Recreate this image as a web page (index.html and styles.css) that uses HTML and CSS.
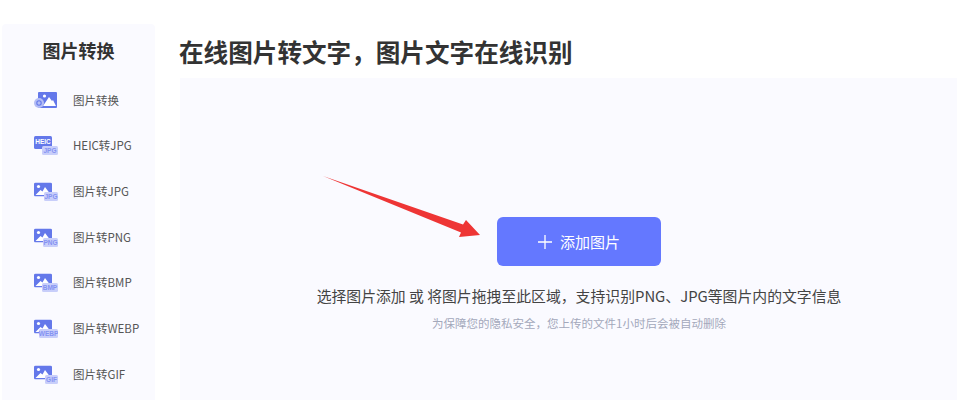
FILE: index.html
```html
<!DOCTYPE html>
<html lang="zh-CN">

<head>
    <meta charset="UTF-8">
    <title>在线图片转文字</title>
    <link rel="stylesheet" href="styles.css">
</head>

<body>
    <svg width="0" height="0" class="defs">
        <symbol id="pic" viewBox="0 0 18 14">
            <rect width="18" height="14" rx="1.5" fill="#6478ea"/>
            <circle cx="4.5" cy="4" r="1.6" fill="#fff"/>
            <path d="M1.5 12.5 L6.5 7.5 L8.5 9 L11 4.5 L17 12.5 Z" fill="#fff"/>
        </symbol>
    </svg>

    <aside class="sidebar">
        <h2>图片转换</h2>
        <ul class="menu">
            <li>
                <svg class="ico" viewBox="0 0 24 20">
                    <rect x="4" y="2" width="19" height="16" rx="1" fill="#6478ea"/>
                    <path d="M9 16 L15 7 L18 11 L19 10 L22 16 Z" fill="#fff"/>
                    <circle cx="10.5" cy="6" r="1.6" fill="#fff"/>
                    <circle cx="5" cy="13" r="5" fill="#b4bdf5"/>
                    <circle cx="5" cy="13" r="2.2" fill="none" stroke="#6478ea" stroke-width="1.1"/>
                </svg>
                <span>图片转换</span>
            </li>
            <li>
                <svg class="ico" viewBox="0 0 24 20">
                    <rect x="0" y="1" width="18" height="13" rx="1.5" fill="#6478ea"/>
                    <text x="9" y="8.5" class="t-heic">HEIC</text>
                    <rect x="8" y="11" width="16" height="9" rx="1.5" fill="#c8cefa"/>
                    <text x="16" y="18" class="t-sub">JPG</text>
                </svg>
                <span>HEIC转JPG</span>
            </li>
            <li>
                <svg class="ico" viewBox="0 0 24 20">
                    <use href="#pic" y="1.5" width="18" height="14"/>
                    <rect x="10" y="11" width="14" height="9" rx="1.5" fill="#c8cefa"/>
                    <text x="17" y="18" class="t-sub">JPG</text>
                </svg>
                <span>图片转JPG</span>
            </li>
            <li>
                <svg class="ico" viewBox="0 0 24 20">
                    <use href="#pic" y="1.5" width="18" height="14"/>
                    <rect x="9" y="11" width="15" height="9" rx="1.5" fill="#c8cefa"/>
                    <text x="16.5" y="18" class="t-sub">PNG</text>
                </svg>
                <span>图片转PNG</span>
            </li>
            <li>
                <svg class="ico" viewBox="0 0 24 20">
                    <use href="#pic" y="1.5" width="18" height="14"/>
                    <rect x="8" y="11" width="16" height="9" rx="1.5" fill="#c8cefa"/>
                    <text x="16" y="18" class="t-sub">BMP</text>
                </svg>
                <span>图片转BMP</span>
            </li>
            <li>
                <svg class="ico" viewBox="0 0 24 20">
                    <use href="#pic" y="1.5" width="18" height="14"/>
                    <rect x="5" y="11" width="19" height="9" rx="1.5" fill="#c8cefa"/>
                    <text x="14.5" y="18" class="t-sub">WEBP</text>
                </svg>
                <span>图片转WEBP</span>
            </li>
            <li>
                <svg class="ico" viewBox="0 0 24 20">
                    <use href="#pic" y="1.5" width="18" height="14"/>
                    <rect x="11" y="11" width="13" height="9" rx="1.5" fill="#c8cefa"/>
                    <text x="17.5" y="18" class="t-sub">GIF</text>
                </svg>
                <span>图片转GIF</span>
            </li>
        </ul>
    </aside>

    <main class="content">
        <h1>在线图片转文字，图片文字在线识别</h1>
        <section class="panel">
            <button class="add">
                <svg class="plus" viewBox="0 0 14 14">
                    <path d="M7 0 V14 M0 7 H14" stroke="#fff" stroke-width="1.3"/>
                </svg>
                <span>添加图片</span>
            </button>
            <p class="tip">选择图片添加 或 将图片拖拽至此区域，支持识别PNG、JPG等图片内的文字信息</p>
            <p class="note">为保障您的隐私安全，您上传的文件1小时后会被自动删除</p>

            <!-- red annotation arrow on top of the panel -->
            <svg class="arrow" viewBox="0 0 158 62">
                <path d="M0 0 L140 48.5 L143 44 L157 59 L136 61 L138 56.5 Z" fill="#ee3535"/>
            </svg>
        </section>
    </main>
</body>

</html>
```

FILE: styles.css
```css
* {
    box-sizing: border-box;
}

html,
body {
    height: 400px;
    overflow: hidden;
}

body {
    margin: 0;
    display: flex;
    background: #fff;
    color: #333;
    font-family: "Noto Sans CJK SC", "Noto Sans", sans-serif;
}

.defs {
    position: absolute;
}

.sidebar {
    flex: none;
    width: 153px;
    height: 376px;
    margin: 24px 0 0 2px;
    background: #fafaff;
    border-radius: 4px 4px 0 0;
}

.sidebar h2 {
    margin: 0;
    padding-top: 13px;
    height: 53px;
    font-size: 18px;
    line-height: 26px;
    font-weight: 700;
    text-align: center;
}

.menu {
    list-style: none;
    margin: 0;
    padding: 0;
}

.menu li {
    display: flex;
    align-items: center;
    gap: 15px;
    height: 45.67px;
    padding-left: 32px;
    font-size: 11.5px;
    color: #555;
}

.ico {
    flex: none;
    width: 24px;
    height: 20px;
}

.ico text {
    text-anchor: middle;
    font-family: "Liberation Sans", sans-serif;
    font-weight: 700;
}

.t-heic {
    font-size: 6.5px;
    fill: #fff;
}

.t-sub {
    font-size: 6.5px;
    fill: #8492f2;
}

.content {
    flex: none;
    width: 798px;
    margin: 24px 0 0 25px;
}

.content h1 {
    margin: 0 0 0 -1px;
    height: 54px;
    padding-top: 9px;
    font-size: 24.6px;
    line-height: 36px;
    font-weight: 700;
    color: #333;
}

.panel {
    position: relative;
    height: 322px;
    padding-top: 139px;
    background: #fafaff;
    text-align: center;
}

.add {
    display: inline-flex;
    align-items: center;
    justify-content: center;
    gap: 8px;
    width: 164px;
    height: 49px;
    border: 0;
    border-radius: 6px;
    background: #6478ff;
    color: #fff;
    font-family: inherit;
    font-size: 15px;
}

.plus {
    width: 14px;
    height: 14px;
}

.tip {
    margin: 18px 0 0;
    font-size: 14.85px;
    line-height: 24px;
    color: #444;
}

.note {
    margin: 6px 0 0;
    font-size: 11.5px;
    line-height: 18px;
    color: #a3a8bb;
}

.arrow {
    position: absolute;
    left: 143px;
    top: 98px;
    width: 158px;
    height: 62px;
}
```
